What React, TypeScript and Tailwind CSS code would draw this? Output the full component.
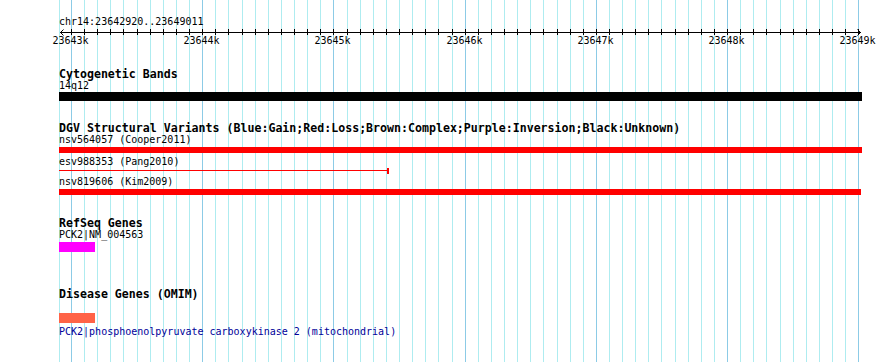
const MONO = "font-['DejaVu_Sans_Mono','Liberation_Mono',monospace]";

// 100 bp per minor grid line, 23643k sits at x=71
const ORIGIN = 71;
const STEP = 13.122;
const gridXs = Array.from({ length: 62 }, (_, i) => {
  const k = i - 1;
  return { x: k === -1 ? 59 : Math.round(ORIGIN + STEP * k), major: k >= 0 && k % 10 === 0, k };
});
const labels = [23643, 23644, 23645, 23646, 23647, 23648, 23649];

function Grid() {
  return (
    <svg className="absolute inset-0" width={890} height={362}>
      {gridXs.map((g) => (
        <rect key={g.k} x={g.x} y={0} width={1} height={362} fill={g.major ? "#8ccbe6" : "#aeecf0"} />
      ))}
    </svg>
  );
}

function Ruler() {
  return (
    <svg className="block" width={890} height={18}>
      <line x1={60} y1={4.5} x2={861} y2={4.5} stroke="#000" strokeWidth={1} />
      <polyline points="63.5,1.5 60.5,4.5 63.5,7.5" fill="none" stroke="#000" strokeWidth={1} />
      <polyline points="857.5,1.5 860.5,4.5 857.5,7.5" fill="none" stroke="#000" strokeWidth={1} />
      {gridXs
        .filter((g) => g.k >= 0)
        .map((g) => (
          <line key={g.k} x1={g.x + 0.5} y1={1} x2={g.x + 0.5} y2={7} stroke="#000" strokeWidth={1} />
        ))}
      {labels.map((l, i) => (
        <text
          key={l}
          x={Math.round(ORIGIN + STEP * 10 * i) - 0.5}
          y={16}
          textAnchor="middle"
          fontFamily="'DejaVu Sans Mono', monospace"
          fontSize={10}
          fill="#000"
        >
          {l}k
        </text>
      ))}
    </svg>
  );
}

function Title({ children, className = "" }: { children: React.ReactNode; className?: string }) {
  return <div className={`ml-[59px] h-[12px] text-[11.6px] leading-[12px] font-bold whitespace-nowrap ${className}`}>{children}</div>;
}

function Label({ children, className = "" }: { children: React.ReactNode; className?: string }) {
  return <div className={`ml-[59px] h-[12px] text-[10px] leading-[12px] whitespace-nowrap ${className}`}>{children}</div>;
}

export default function App() {
  return (
    <div className={`relative w-[890px] h-[362px] overflow-hidden bg-white text-black ${MONO}`}>
      <Grid />
      <div className="relative pt-[16px]">
        <Label>chr14:23642920..23649011</Label>
        <Ruler />

        <Title className="mt-[22px]">Cytogenetic Bands</Title>
        <Label>14q12</Label>
        <div className="ml-[59px] w-[803px] h-[9px] bg-black" />

        <Title className="mt-[21px]">DGV Structural Variants (Blue:Gain;Red:Loss;Brown:Complex;Purple:Inversion;Black:Unknown)</Title>
        <Label>nsv564057 (Cooper2011)</Label>
        <div className="ml-[59px] mt-[1px] w-[803px] h-[6px] bg-[#ff0000]" />
        <Label className="mt-[3px]">esv988353 (Pang2010)</Label>
        <div className="ml-[59px] h-[8px] flex items-start">
          <div className="w-[328px] h-[1px] mt-[2px] bg-[#ff0000]" />
          <div className="w-[2px] h-[6px] bg-[#ff0000]" />
        </div>
        <Label>nsv819606 (Kim2009)</Label>
        <div className="ml-[59px] mt-[1px] w-[802px] h-[6px] bg-[#ff0000]" />

        <Title className="mt-[22px]">RefSeq Genes</Title>
        <Label>PCK2|NM_004563</Label>
        <div className="ml-[59px] mt-[1px] w-[36px] h-[10px] bg-[#ff00ff]" />

        <Title className="mt-[36px]">Disease Genes (OMIM)</Title>
        <div className="ml-[59px] mt-[13px] w-[36px] h-[10px] bg-[#ff6347]" />
        <Label className="mt-[3px] text-[#000099]">PCK2|phosphoenolpyruvate carboxykinase 2 (mitochondrial)</Label>
      </div>
    </div>
  );
}
